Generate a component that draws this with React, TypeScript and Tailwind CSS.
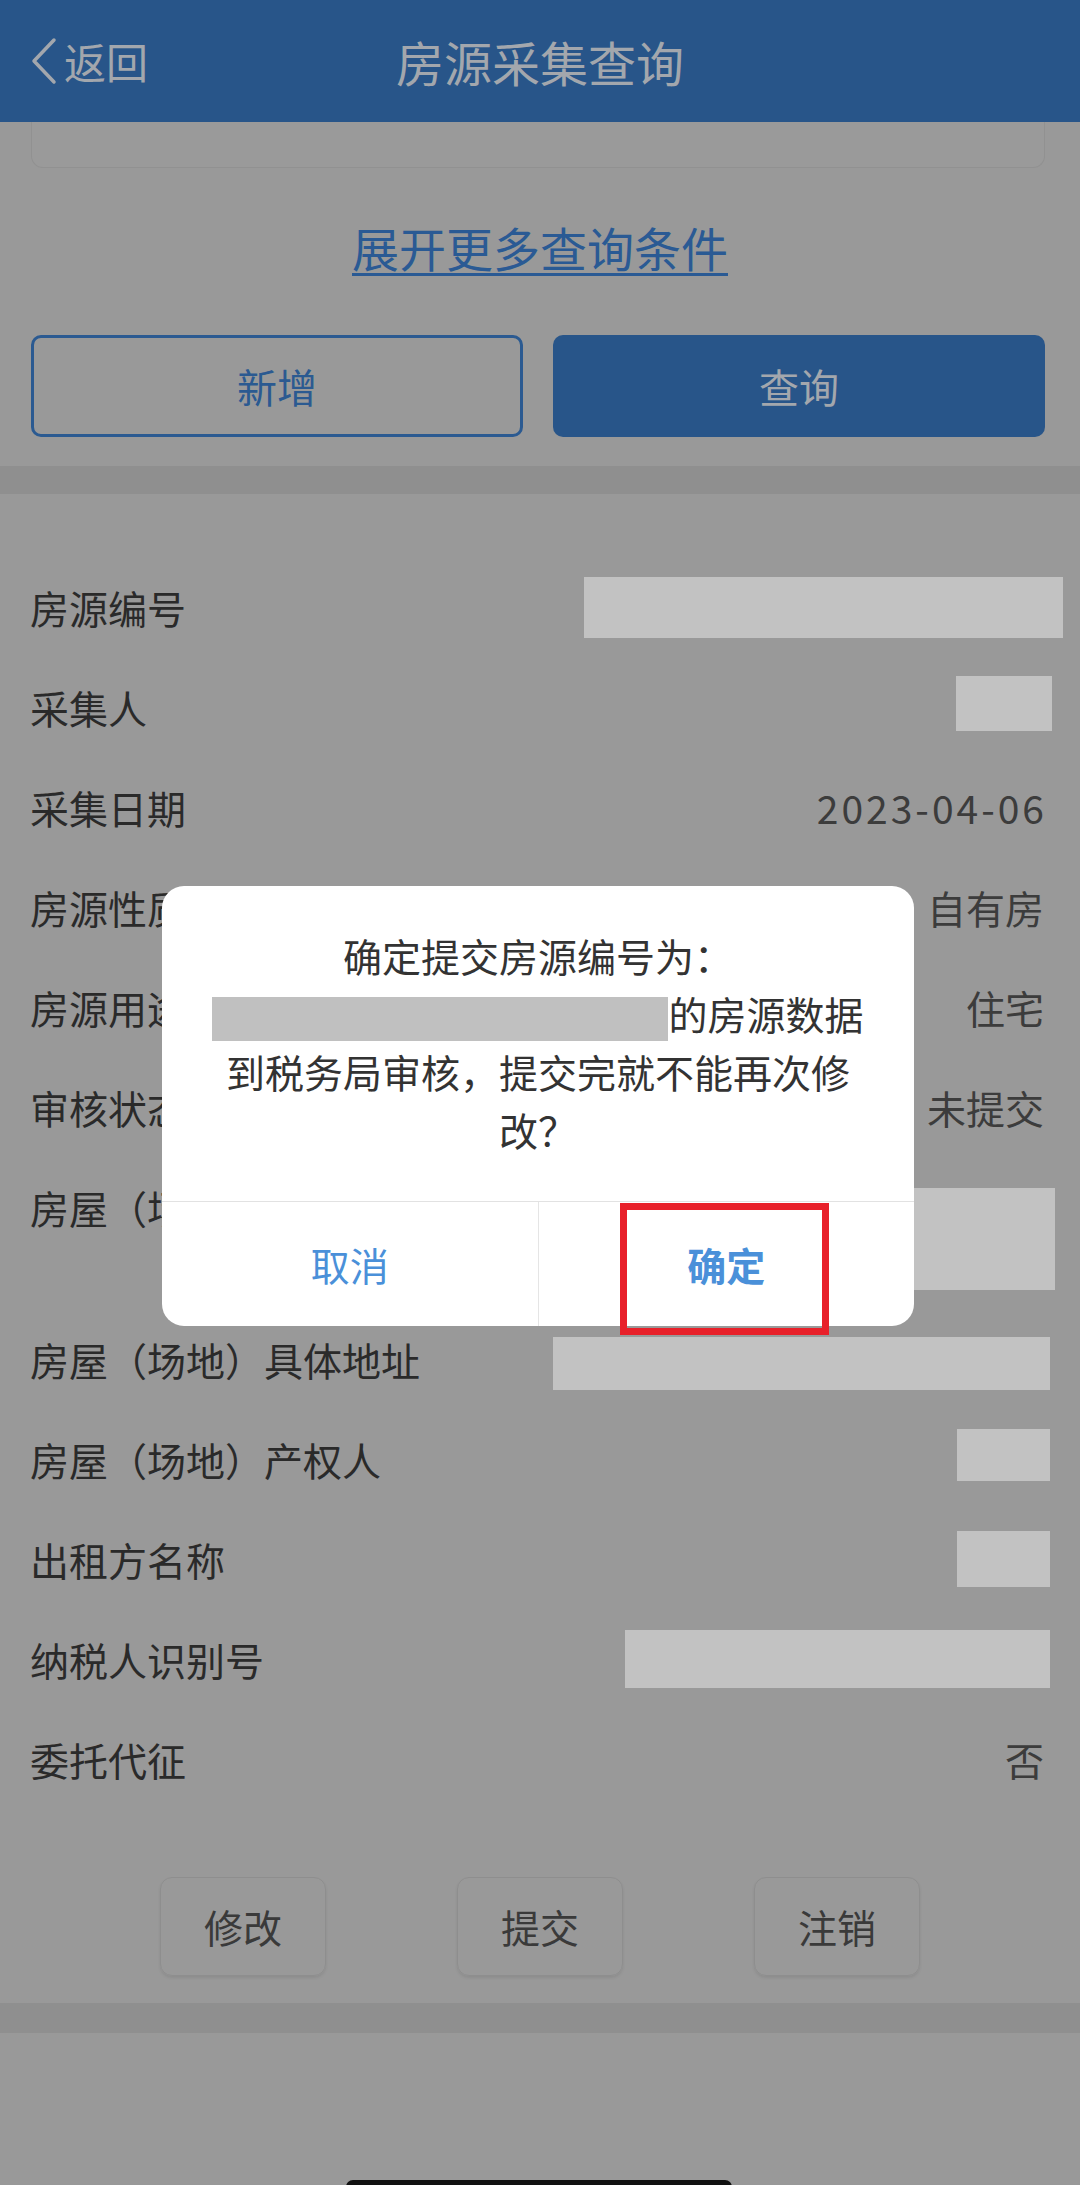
import React from "react";

function Row({
  label,
  children,
  tall,
}: {
  label: string;
  children?: React.ReactNode;
  tall?: boolean;
}) {
  return (
    <div
      className={
        tall
          ? "h-[152px] flex items-start justify-between pt-[24px] pl-[30px] pr-[36px]"
          : "h-[100px] flex items-center justify-between pl-[30px] pr-[36px]"
      }
    >
      <span className="text-[39px] leading-[52px] text-[#2a2a2a] whitespace-nowrap">{label}</span>
      {children}
    </div>
  );
}

function Val({ children, wide }: { children: React.ReactNode; wide?: boolean }) {
  return (
    <span
      className={
        wide
          ? "text-[39px] leading-[52px] text-[#3c3c3c] whitespace-nowrap tracking-[3px] -mr-[3px]"
          : "text-[39px] leading-[52px] text-[#3c3c3c] whitespace-nowrap"
      }
    >
      {children}
    </span>
  );
}

export default function App() {
  return (
    <div className="relative w-[1080px] h-[2185px] overflow-hidden bg-[#999999] font-['Noto_Sans_CJK_SC','Noto_Sans',sans-serif]">
      {/* Header */}
      <header className="h-[122px] bg-[#285589] grid grid-cols-[1fr_auto_1fr] items-center">
        <div className="flex items-center pl-[31px] gap-[7px] text-[#a3a7ad]">
          <svg width="26" height="48" viewBox="0 0 26 48" fill="none">
            <polyline points="23,3 3,24 23,45" stroke="#a3a7ad" strokeWidth="3.5" strokeLinecap="round" strokeLinejoin="round" />
          </svg>
          <span className="text-[42px] leading-none">返回</span>
        </div>
        <div className="text-[48px] leading-none text-[#a3a7ad]">房源采集查询</div>
        <div />
      </header>

      {/* Query section */}
      <section className="pb-[29px]">
        <div className="ml-[31px] mr-[35px] h-[46px] rounded-b-[12px] border border-t-0 border-[#919191] bg-[#9a9a9a]" />
        <div className="mt-[51px] flex justify-center">
          <span className="text-[47px] leading-[56px] text-[#2a5a94] underline decoration-[3px] underline-offset-[6px]">
            展开更多查询条件
          </span>
        </div>
        <div className="mt-[60px] ml-[31px] mr-[35px] grid grid-cols-2 gap-[30px]">
          <div className="h-[102px] rounded-[10px] border-[3px] border-[#2b5a91] flex items-center justify-center text-[40px] text-[#2b5a91]">
            新增
          </div>
          <div className="h-[102px] rounded-[10px] bg-[#285589] flex items-center justify-center text-[40px] text-[#a3a7ad]">
            查询
          </div>
        </div>
      </section>

      <div className="h-[28px] bg-[#8f8f8f]" />

      {/* Detail rows */}
      <section className="pt-[63px]">
        <Row label="房源编号">
          <div className="w-[479px] h-[61px] bg-[#c2c2c2] -mr-[19px]" />
        </Row>
        <Row label="采集人">
          <div className="w-[96px] h-[55px] bg-[#c2c2c2] -mr-[8px] -mt-[7px]" />
        </Row>
        <Row label="采集日期">
          <Val wide>2023-04-06</Val>
        </Row>
        <Row label="房源性质">
          <Val>自有房</Val>
        </Row>
        <Row label="房源用途">
          <Val>住宅</Val>
        </Row>
        <Row label="审核状态">
          <Val>未提交</Val>
        </Row>
        <Row label="房屋（场地）所在区域" tall>
          <div className="w-[144px] h-[102px] bg-[#c2c2c2] -mr-[11px] mt-[7px]" />
        </Row>
        <Row label="房屋（场地）具体地址">
          <div className="w-[497px] h-[53px] bg-[#c2c2c2] -mr-[6px] mt-[8px]" />
        </Row>
        <Row label="房屋（场地）产权人">
          <div className="w-[93px] h-[52px] bg-[#c2c2c2] -mr-[6px] -mt-[8px]" />
        </Row>
        <Row label="出租方名称">
          <div className="w-[93px] h-[56px] bg-[#c2c2c2] -mr-[6px]" />
        </Row>
        <Row label="纳税人识别号">
          <div className="w-[425px] h-[58px] bg-[#c2c2c2] -mr-[6px]" />
        </Row>
        <Row label="委托代征">
          <Val>否</Val>
        </Row>

        <div className="flex justify-center gap-[131px] pt-[68px] pb-[27px]">
          {["修改", "提交", "注销"].map((t) => (
            <div
              key={t}
              className="w-[166px] h-[99px] rounded-[12px] border border-[#8e8e8e] shadow-[0_2px_3px_rgba(0,0,0,0.08)] flex items-center justify-center text-[39px] text-[#3a3a3a]"
            >
              {t}
            </div>
          ))}
        </div>
      </section>

      <div className="h-[30px] bg-[#8f8f8f]" />

      {/* Modal dialog */}
      <div className="absolute left-[162px] top-[886px] w-[752px] rounded-[22px] bg-white overflow-hidden">
        <div className="px-[48px] pt-[40px] pb-[43px] text-center text-[39px] leading-[58px] text-[#333333]">
          确定提交房源编号为：
          <span className="inline-block w-[456px] h-[44px] bg-[#c0c0c0] align-middle" />
          的房源数据到税务局审核，提交完就不能再次修改？
        </div>
        <div className="flex h-[125px] border-t border-[#e2e2e2]">
          <div className="flex-1 flex items-center justify-center text-[39px] text-[#4a90d9]">取消</div>
          <div className="flex-1 flex items-center justify-center text-[39px] font-semibold text-[#4a90d9] border-l border-[#e5e5e5]">
            确定
          </div>
        </div>
      </div>

      {/* Red highlight */}
      <div className="absolute left-[620px] top-[1203px] w-[209px] h-[132px] border-[7px] border-[#e8202a]" />

      {/* Home indicator */}
      <div className="absolute left-[346px] top-[2180px] w-[386px] h-[14px] rounded-full bg-[#111111]" />
    </div>
  );
}
